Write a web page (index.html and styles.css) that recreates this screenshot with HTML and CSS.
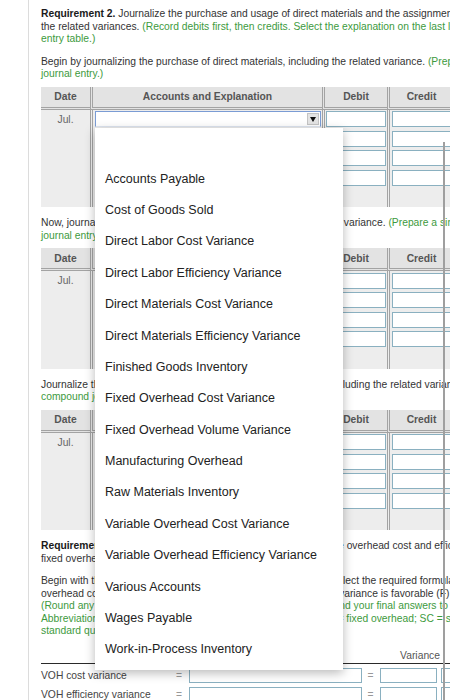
FILE: index.html
```html
<!DOCTYPE html>
<html lang="en">
<head>
<meta charset="utf-8">
<title>Requirement 2</title>
<link rel="stylesheet" href="styles.css">
</head>
<body>
<div class="page">
  <p class="q"><b>Requirement 2.</b> Journalize the purchase and usage of direct materials and the assignment of direct labor, including<br>the related variances. <span class="g">(Record debits first, then credits. Select the explanation on the last line of the journal<br>entry table.)</span></p>
  <p class="q lead">Begin by journalizing the purchase of direct materials, including the related variance. <span class="g">(Prepare a single<br>journal entry.)</span></p>

  <div class="jt">
    <div class="h">Date</div><div class="h s">Accounts and Explanation</div><div class="h s">Debit</div><div class="h s">Credit</div>
    <div class="c date">Jul.</div>
    <div class="c s">
      <div class="sel open">
        <span class="arr"><svg width="6" height="5" viewBox="0 0 6 5"><path d="M0 0H6L3 5Z" fill="#111"/></svg></span>
        <ul class="dd">
          <li></li>
          <li>Accounts Payable</li>
          <li>Cost of Goods Sold</li>
          <li>Direct Labor Cost Variance</li>
          <li>Direct Labor Efficiency Variance</li>
          <li>Direct Materials Cost Variance</li>
          <li>Direct Materials Efficiency Variance</li>
          <li>Finished Goods Inventory</li>
          <li>Fixed Overhead Cost Variance</li>
          <li>Fixed Overhead Volume Variance</li>
          <li>Manufacturing Overhead</li>
          <li>Raw Materials Inventory</li>
          <li>Variable Overhead Cost Variance</li>
          <li>Variable Overhead Efficiency Variance</li>
          <li>Various Accounts</li>
          <li>Wages Payable</li>
          <li>Work-in-Process Inventory</li>
        </ul>
      </div>
    </div>
    <div class="c s amt"><input class="in" type="text"></div><div class="c s amt cr"><input class="in" type="text"></div>
    <div class="c date"></div><div class="c s"><div class="sel"></div></div><div class="c s amt"><input class="in" type="text"></div><div class="c s amt cr"><input class="in" type="text"></div>
    <div class="c date"></div><div class="c s"><div class="sel"></div></div><div class="c s amt"><input class="in" type="text"></div><div class="c s amt cr"><input class="in" type="text"></div>
    <div class="c date"></div><div class="c s"><div class="sel"></div></div><div class="c s amt"><input class="in" type="text"></div><div class="c s amt cr"><input class="in" type="text"></div>
    <div class="c date"></div><div class="c s"><div class="sel"></div></div><div class="c s amt"></div><div class="c s amt cr"></div>
  </div>

  <p class="q lead">Now, journalize the usage of direct materials, including the related variance. <span class="g">(Prepare a single<br>journal entry.)</span></p>

  <div class="jt">
    <div class="h">Date</div><div class="h s">Accounts and Explanation</div><div class="h s">Debit</div><div class="h s">Credit</div>
    <div class="c date">Jul.</div><div class="c s"><div class="sel"></div></div><div class="c s amt"><input class="in" type="text"></div><div class="c s amt cr"><input class="in" type="text"></div>
    <div class="c date"></div><div class="c s"><div class="sel"></div></div><div class="c s amt"><input class="in" type="text"></div><div class="c s amt cr"><input class="in" type="text"></div>
    <div class="c date"></div><div class="c s"><div class="sel"></div></div><div class="c s amt"><input class="in" type="text"></div><div class="c s amt cr"><input class="in" type="text"></div>
    <div class="c date"></div><div class="c s"><div class="sel"></div></div><div class="c s amt"><input class="in" type="text"></div><div class="c s amt cr"><input class="in" type="text"></div>
    <div class="c date"></div><div class="c s"><div class="sel"></div></div><div class="c s amt"></div><div class="c s amt cr"></div>
  </div>

  <p class="q lead">Journalize the incurrence and assignment of direct labor costs, including the related variances. <span class="g">(Prepare a single<br>compound journal entry.)</span></p>

  <div class="jt">
    <div class="h">Date</div><div class="h s">Accounts and Explanation</div><div class="h s">Debit</div><div class="h s">Credit</div>
    <div class="c date">Jul.</div><div class="c s"><div class="sel"></div></div><div class="c s amt"><input class="in" type="text"></div><div class="c s amt cr"><input class="in" type="text"></div>
    <div class="c date"></div><div class="c s"><div class="sel"></div></div><div class="c s amt"><input class="in" type="text"></div><div class="c s amt cr"><input class="in" type="text"></div>
    <div class="c date"></div><div class="c s"><div class="sel"></div></div><div class="c s amt"><input class="in" type="text"></div><div class="c s amt cr"><input class="in" type="text"></div>
    <div class="c date"></div><div class="c s"><div class="sel"></div></div><div class="c s amt"><input class="in" type="text"></div><div class="c s amt cr"><input class="in" type="text"></div>
    <div class="c date"></div><div class="c s"><div class="sel"></div></div><div class="c s amt"></div><div class="c s amt cr"></div>
  </div>

  <p class="q"><b>Requirement 3.</b> Journalize all the overhead, including the variable overhead cost and efficiency variances and the<br>fixed overhead cost and volume variances.</p>
  <p class="q">Begin with the variable overhead cost and efficiency variances. Select the required formulas, compute the variable<br>overhead cost and efficiency variances. Determine whether each variance is favorable (F) or unfavorable (U).<br><span class="g">(Round any intermediate calculations to the nearest cent, and round your final answers to the nearest whole dollar.<br>Abbreviations used: AC = actual cost; AQ = actual quantity; FOH = fixed overhead; SC = standard cost; SQ =<br>standard quantity; VOH = variable overhead.)</span></p>

  <div class="fgrid fhead">
    <span class="vh">Variance</span>
  </div>
  <div class="fgrid frow first">
    <span class="lbl">VOH cost variance</span><span class="eq">=</span><input class="in f1" type="text"><span class="eq">=</span><input class="in f2" type="text"><input class="in f3" type="text">
  </div>
  <div class="fgrid frow">
    <span class="lbl">VOH efficiency variance</span><span class="eq">=</span><input class="in f1" type="text"><span class="eq">=</span><input class="in f2" type="text"><input class="in f3" type="text">
  </div>
</div>
<div class="vbar"></div>
</body>
</html>
```

FILE: styles.css
```css
html, body {
  margin: 0;
  padding: 0;
  background: #fff;
  overflow: hidden;
}
body {
  position: relative;
  width: 450px;
  height: 700px;
  font-family: "Liberation Sans", Arial, sans-serif;
  color: #333;
}
.page {
  margin-left: 28px;
  border-left: 1px solid #dcdcdc;
  padding: 8px 0 0 12px;
  width: 640px;
  min-height: 700px;
  box-sizing: border-box;
}
.q {
  margin: 0 0 10px;
  font-size: 10.3px;
  line-height: 12.5px;
  white-space: nowrap;
}
.q.lead { margin-bottom: 6px; }
.q b { color: #1a1a1a; }
.g { color: #3d9a3d; }

/* journal table */
.jt {
  display: grid;
  grid-template-columns: 49px 232px 65px 66px;
  grid-template-rows: 23px repeat(5, 19.5px);
  margin-bottom: 10px;
  font-size: 10.3px;
}
.jt .h {
  box-sizing: border-box;
  background: #e3e3e3;
  border-bottom: 3px double #a3a3a3;
  font-weight: bold;
  color: #555;
  display: flex;
  align-items: center;
  justify-content: center;
}
.jt .c {
  box-sizing: border-box;
  background: #ededed;
  display: flex;
  align-items: center;
}
.jt .s { border-left: 3px double #a3a3a3; }
.jt .date {
  justify-content: center;
  color: #666;
}
.jt .amt { padding: 0 1px; }
.jt .amt.cr { padding: 0 2px; }

.in {
  display: block;
  box-sizing: border-box;
  width: 100%;
  height: 16px;
  margin: 0;
  padding: 0;
  border: 1px solid #8ab0c0;
  background: #fff;
  font: inherit;
  outline: none;
}

.sel {
  position: relative;
  box-sizing: border-box;
  width: 226px;
  height: 16px;
  margin-left: 2px;
  border: 1px solid #b9c6d8;
  background: #fff;
  display: flex;
  align-items: center;
  justify-content: flex-end;
  padding-right: 1px;
}
.sel.open {
  border-color: #7b9cd4;
  border-bottom-color: #dfe6f2;
}
.arr {
  box-sizing: border-box;
  width: 12px;
  height: 12px;
  background: #e4e4e4;
  border: 1px solid #c4c4c4;
  display: flex;
  align-items: center;
  justify-content: center;
}
.arr svg { display: block; }

.dd {
  position: absolute;
  top: calc(100% + 2px);
  left: -1px;
  z-index: 5;
  width: 248px;
  margin: 0;
  padding: 4px 0;
  list-style: none;
  background: #fff;
  box-shadow: 0 3px 10px rgba(0, 0, 0, 0.28);
}
.dd li {
  height: 31.38px;
  line-height: 31.38px;
  padding-left: 10px;
  font-size: 12.5px;
  color: #222;
  white-space: nowrap;
}

/* formula rows */
.fgrid {
  display: grid;
  grid-template-columns: 130px 16px 176px 15px 60px 40px;
  align-items: center;
  font-size: 10.3px;
}
.fhead {
  margin-top: 10px;
  height: 16px;
  border-bottom: 1px solid #2a2a2a;
  box-sizing: border-box;
  width: 437px;
}
.vh {
  grid-column: 5 / 6;
  justify-self: end;
  margin-right: -2px;
  color: #555;
}
.frow { height: 19px; }
.frow.first { margin-top: 2px; }
.lbl { color: #444; white-space: nowrap; }
.eq { color: #999; text-align: center; }
.in.f1 { width: 173px; margin-left: 2px; height: 15px; }
.in.f2 { width: 57px; margin-left: 2px; height: 15px; }
.in.f3 { width: 30px; margin-left: 3px; height: 15px; }

.vbar {
  position: absolute;
  left: 443px;
  top: 142px;
  bottom: 0;
  width: 2px;
  background: #9f9f9f;
}
```
